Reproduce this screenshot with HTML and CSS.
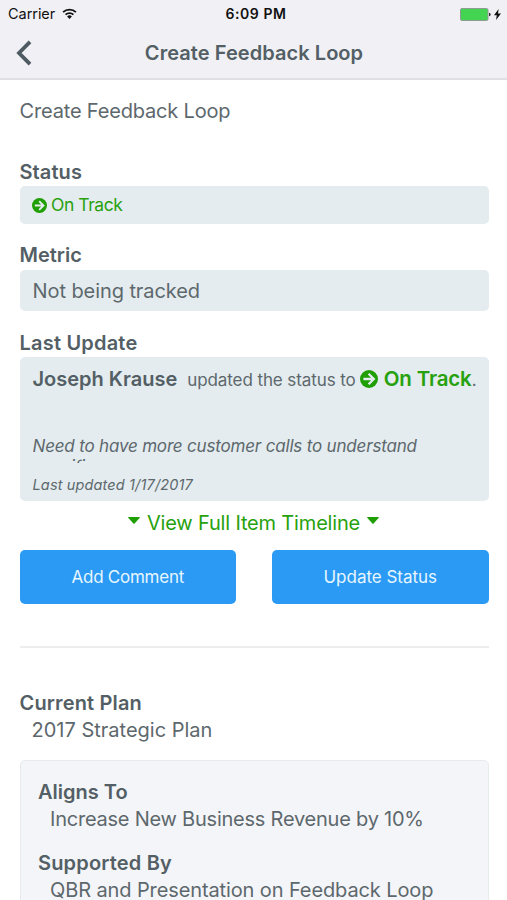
FILE: index.html
```
<!DOCTYPE html>
<html lang="en">
<head>
<meta charset="utf-8">
<title>Create Feedback Loop</title>
<link rel="stylesheet" href="styles.css">
</head>
<body>
<svg class="defs" aria-hidden="true">
  <symbol id="arrow-circle" viewBox="0 0 18 18">
    <circle cx="9" cy="9" r="9"/>
    <path d="M3.4 9H13.4M8.6 3.8L13.8 9L8.6 14.2" fill="none" stroke="#e4ecef" stroke-width="2.3"/>
  </symbol>
  <symbol id="caret" viewBox="0 0 12 7"><path d="M.6 0H11.4Q12.2 .3 11.6 1L6.6 6.6Q6 7.1 5.4 6.6L.4 1Q-.2 .3 .6 0Z"/></symbol>
</svg>
<header class="top">
  <div class="statusbar">
    <div class="carrier"><span>Carrier</span>
      <svg class="wifi" viewBox="0 0 16 12"><g fill="none" stroke="#111" stroke-width="2"><path d="M1 4.6A10 10 0 0 1 15 4.6"/><path d="M3.7 7.3A6.2 6.2 0 0 1 12.3 7.3"/></g><path d="M8 12L5.4 9.3A3.7 3.7 0 0 1 10.6 9.3Z" fill="#111"/></svg>
    </div>
    <span class="time">6:09 PM</span>
    <div class="power">
      <svg class="battery" viewBox="0 0 31 13"><rect x=".5" y=".5" width="27.5" height="12" rx="1.5" fill="#43d551" stroke="#8f9a92"/><path d="M29 4.7Q30.7 5 30.7 6.5T29 8.3Z" fill="#333"/></svg>
      <svg class="bolt" viewBox="0 0 7 11"><path d="M4.6 0L0 6.2H2.8L2 11L7 4.5H4Z" fill="#111"/></svg>
    </div>
  </div>
  <nav class="nav">
    <svg class="back" viewBox="0 0 16 26"><path d="M14 1.8L3 13L14 24.2" fill="none" stroke="#4f5b62" stroke-width="3.8"/></svg>
    <h1>Create Feedback Loop</h1>
  </nav>
</header>
<main>
  <p class="name">Create Feedback Loop</p>

  <h2 class="l-status">Status</h2>
  <div class="panel status"><svg><use href="#arrow-circle"/></svg><span>On Track</span></div>

  <h2 class="l-metric">Metric</h2>
  <div class="panel metric">Not being tracked</div>

  <h2 class="l-update">Last Update</h2>
  <div class="panel update">
    <div class="headline"><b>Joseph Krause</b><span class="action">updated the status to</span><svg><use href="#arrow-circle"/></svg><b class="green">On Track</b><span class="action">.</span></div>
    <p class="comment">Need to have more customer calls to understand<br>specific</p>
    <p class="stamp">Last updated 1/17/2017</p>
  </div>

  <a class="timeline"><svg><use href="#caret"/></svg><span>View Full Item Timeline</span><svg><use href="#caret"/></svg></a>

  <div class="actions"><button class="add">Add Comment</button><button class="upd">Update Status</button></div>

  <hr>

  <h2 class="l-plan">Current Plan</h2>
  <p class="value">2017 Strategic Plan</p>

  <section class="card">
    <h2 class="l-aligns">Aligns To</h2>
    <p class="value goal">Increase New Business Revenue by 10%</p>
    <h2 class="l-support">Supported By</h2>
    <p class="value support">QBR and Presentation on Feedback Loop</p>
  </section>
</main>
</body>
</html>
```
FILE: styles.css
```
* { box-sizing: border-box; }
html, body { height: 100%; overflow: hidden; }
body { margin: 0; background: #fff; color: #5d686d; font: 400 20px/28px Inter, "Liberation Sans", sans-serif; }
h1, h2, p { margin: 0; white-space: nowrap; }
h1, h2, b { font-size: 20px; font-weight: 600; color: #535f65; }
svg { display: block; flex: none; }
.defs { display: none; }

.top { height: 80px; background: #f0f0f5; border-bottom: 2px solid #dfdfe4; }
.statusbar { display: grid; grid-template-columns: 1fr auto 1fr; align-items: center; height: 28px; padding: 0 6px 0 8px; color: #111; font-size: 14.5px; }
.carrier { display: flex; align-items: center; gap: 7px; letter-spacing: -.05px; }
.wifi { width: 15px; height: 11px; margin-top: -2px; }
.time { font-size: 14px; font-weight: 600; letter-spacing: .56px; padding-left: 3px; }
.power { display: flex; justify-content: flex-end; align-items: center; gap: 3px; }
.battery { width: 31px; height: 13px; }
.bolt { width: 7px; height: 11px; }
.nav { display: grid; grid-template-columns: 40px 1fr 39px; align-items: center; height: 49px; }
.back { width: 16px; height: 26px; margin-left: 16px; }
h1 { text-align: center; letter-spacing: .06px; }

main { padding: 0 18.5px 0 19.5px; }
.name { padding-top: 16.5px; letter-spacing: -.17px; }
h2 { line-height: 28px; }
.l-status { margin-top: 33.5px; letter-spacing: .09px; }
.l-metric { margin-top: 17px; }
.l-update { margin-top: 17.5px; letter-spacing: .2px; }
.l-plan { margin-top: 41px; letter-spacing: .15px; }
.panel { border-radius: 5px; background: #e4ecef; }
.status { display: flex; align-items: center; gap: 4px; height: 38px; padding: 0 12.5px; color: #27a10e; font-size: 17.5px; letter-spacing: -.45px; }
.status svg { width: 15px; height: 15px; fill: #1f9f04; }
.metric { height: 41px; margin-top: 1px; padding: 7px 13px; letter-spacing: -.08px; }
.update { height: 144px; padding: 8px 13px; }
.headline { display: flex; align-items: center; height: 28px; white-space: nowrap; }
.headline .action { font-size: 17px; letter-spacing: -.09px; padding-top: 2px; }
.headline b + .action { margin-left: 10px; }
.headline svg { width: 18px; height: 18px; margin: 0 6px 0 4px; fill: #1f9f04; }
.headline .green { color: #27a10e; font-size: 20.5px; letter-spacing: -.15px; }
.headline .green + .action { margin-left: 0; }
.comment { height: 27px; margin-top: 43px; overflow: hidden; font-size: 17px; font-style: italic; line-height: 21px; letter-spacing: -.18px; }
.stamp { margin-top: 8px; font-size: 14.5px; font-style: italic; letter-spacing: .14px; }
.timeline { display: flex; justify-content: center; align-items: center; gap: 7px; height: 28px; margin: 8px 1px 0 0; color: #27a10e; letter-spacing: -.17px; }
.timeline svg { width: 12px; height: 7px; margin-top: -4px; fill: #1f9f04; }
.actions { display: flex; justify-content: space-between; margin-top: 13px; }
button { width: 216.5px; height: 54px; padding: 0; border: 0; border-radius: 5px; background: #2a9af4; color: #e7f6ff; font: 17px Inter, "Liberation Sans", sans-serif; }
.add { letter-spacing: -.25px; }
.upd { letter-spacing: -.02px; }
hr { height: 2px; margin: 42px 0 0; border: 0; background: #ededef; }
.value { padding-left: 12px; line-height: 27px; }
.card { margin-top: 16.5px; height: 180px; padding: 16.5px 17.5px; border: 1px solid #e6ebed; border-radius: 5px; background: #f4f5f8; }
.goal { letter-spacing: -.23px; }
.l-support { margin-top: 16px; letter-spacing: .18px; }
.support { letter-spacing: -.11px; }
```
